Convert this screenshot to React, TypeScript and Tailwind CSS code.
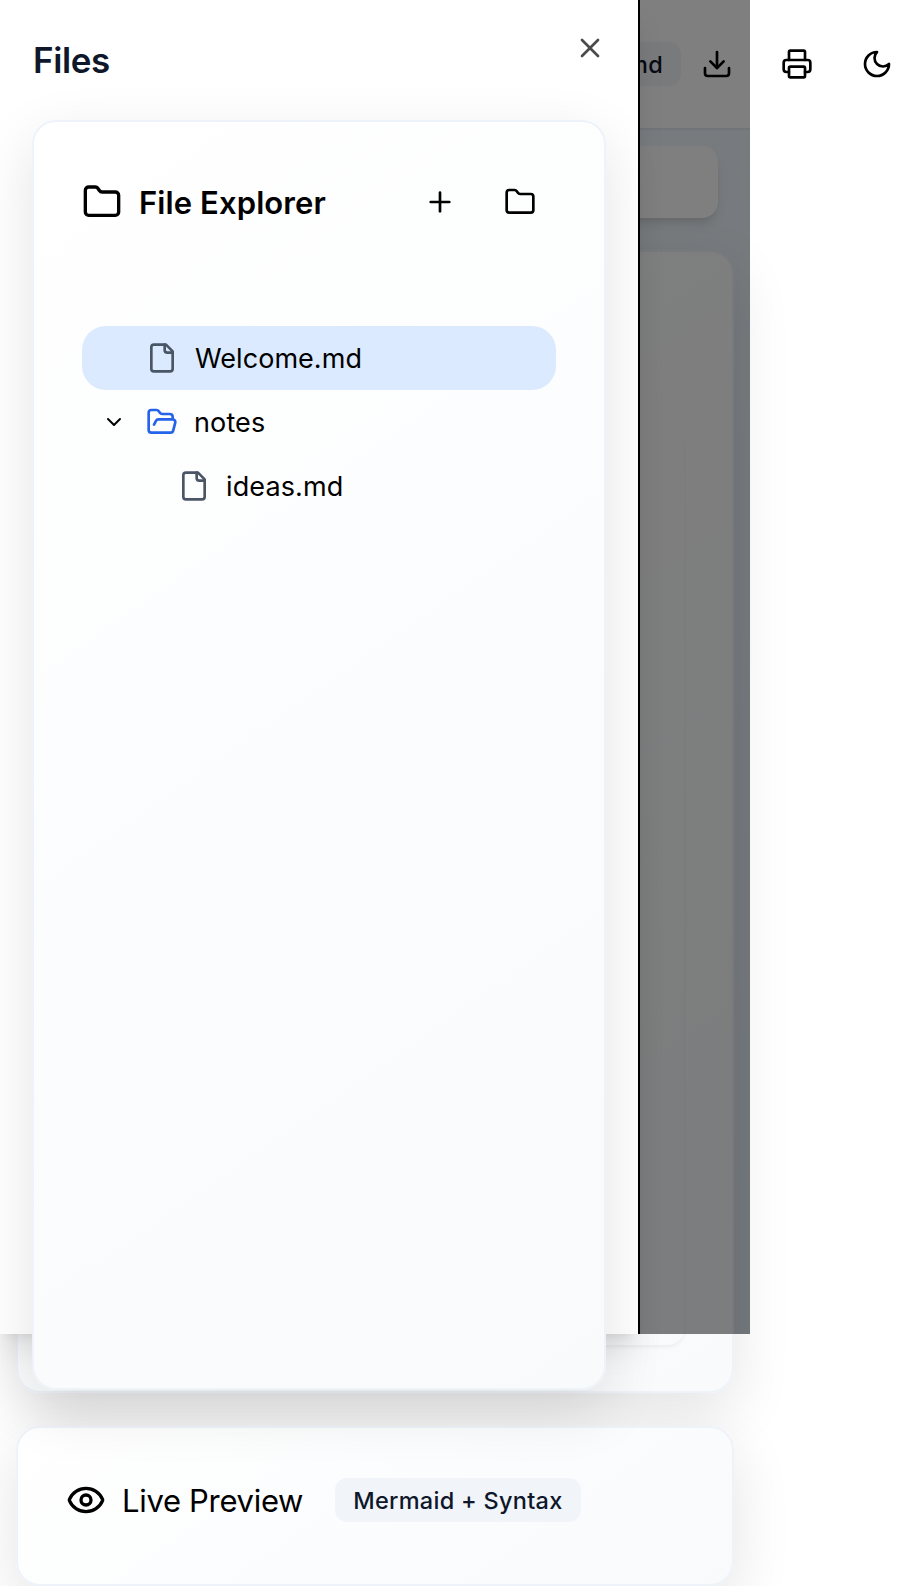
import type { ReactNode } from "react";
import { ChevronDown, Download, Eye, Folder, FolderOpen, Plus, Printer, X } from "lucide-react";

const card =
  "rounded-[24px] border-2 border-[#eef3f9] bg-linear-[145deg] from-white to-[#f8fafc] shadow-[0_20px_60px_rgba(0,0,0,0.11)]";

function Icon({ children, className = "" }: { children: ReactNode; className?: string }) {
  return (
    <svg
      viewBox="0 0 24 24"
      fill="none"
      stroke="currentColor"
      strokeWidth={2}
      strokeLinecap="round"
      strokeLinejoin="round"
      className={`size-8 shrink-0 ${className}`}
    >
      {children}
    </svg>
  );
}

function FileIcon() {
  return (
    <Icon className="text-gray-600">
      <path d="M15 2H6a2 2 0 0 0-2 2v16a2 2 0 0 0 2 2h12a2 2 0 0 0 2-2V7Z" />
      <path d="M14 2v4a2 2 0 0 0 2 2h4" />
    </Icon>
  );
}

function MoonIcon() {
  return (
    <Icon>
      <path d="M12 3a6 6 0 0 0 9 9 9 9 0 1 1-9-9Z" />
    </Icon>
  );
}

function Badge({ children }: { children: ReactNode }) {
  return (
    <span className="flex h-11 shrink-0 items-center whitespace-nowrap rounded-[12px] bg-[#f1f5f9] px-[18px] pt-0.5 text-[23.5px] leading-8 font-medium tracking-[0.28px] text-slate-900">
      {children}
    </span>
  );
}

function Header() {
  return (
    <header className="flex h-[130px] w-[750px] shrink-0 items-center justify-end border-b-2 border-slate-200 bg-white">
      <div className="-mr-[163px] flex shrink-0 items-center">
        <Badge>Welcome.md</Badge>
        <div className="flex gap-2">
          <button className="flex h-16 w-[72px] items-center justify-center"><Download size={32} /></button>
          <button className="flex h-16 w-[72px] items-center justify-center"><Printer size={32} /></button>
          <button className="flex h-16 w-[72px] items-center justify-center"><MoonIcon /></button>
        </div>
      </div>
    </header>
  );
}

function Drawer() {
  return (
    <aside className="absolute top-0 left-0 flex h-[1334px] w-[640px] flex-col border-r-2 border-black bg-white px-8 pt-8 shadow-[0_20px_30px_-6px_rgba(0,0,0,0.1),0_8px_12px_-8px_rgba(0,0,0,0.1)]">
      <div className="flex h-[88px] shrink-0 justify-between">
        <h2 className="pl-px text-[35px] leading-[57px] font-semibold tracking-[-0.4px] text-slate-900">Files</h2>
        <button className="flex size-8 items-center justify-center opacity-70"><X size={32} /></button>
      </div>
      <section className={`${card} flex h-[1270px] w-[574px] shrink-0 flex-col p-12`}>
        <div className="flex h-16 items-center justify-between">
          <h3 className="flex items-center gap-4 text-[31px] leading-8 font-semibold tracking-[0.1px]">
            <Folder size={40} />
            <span className="pt-0.5 pl-px">File Explorer</span>
          </h3>
          <div className="flex gap-2">
            <button className="flex h-16 w-[72px] items-center justify-center"><Plus size={32} /></button>
            <button className="flex h-16 w-[72px] items-center justify-center"><Folder size={32} /></button>
          </div>
        </div>
        <ul className="mt-[92px] text-[27px] leading-10 tracking-[0.12px]">
          <li className="flex h-16 items-center gap-4 rounded-[24px] bg-blue-100 pl-16">
            <FileIcon />
            <span className="pt-0.5 pl-px tracking-[0.05px]">Welcome.md</span>
          </li>
          <li className="flex h-16 items-center pl-5">
            <ChevronDown size={24} className="mr-5" />
            <FolderOpen size={32} className="mr-4 text-[#2563eb]" />
            <span className="pt-0.5">notes</span>
          </li>
          <li className="flex h-16 items-center gap-4 pl-24">
            <FileIcon />
            <span className="pt-0.5">ideas.md</span>
          </li>
        </ul>
      </section>
    </aside>
  );
}

export default function App() {
  return (
    <div className="relative h-[1586px] w-[912px] overflow-hidden bg-white font-['Inter',sans-serif] text-black [font-optical-sizing:none]">
      <div className="h-[1334px] w-[750px] bg-linear-to-br from-slate-50 to-[#e8f2fc]">
        <Header />
        <main className="flex flex-col px-4 pt-4">
          <div className="w-[702px] self-start pl-4">
            <div className="h-[72px] rounded-2xl bg-white shadow-[0_8px_12px_-2px_rgba(0,0,0,0.1),0_4px_8px_-4px_rgba(0,0,0,0.1)]" />
          </div>
          <section className={`${card} mt-8 h-[1143px] w-[718px] px-12 pt-[188px] pb-[46px]`}>
            <div className="h-full rounded-b-2xl shadow-[0_2px_4px_rgba(0,0,0,0.06)]" />
          </section>
          <section className={`${card} mt-[33px] flex h-[160px] w-[718px] items-center px-12 pb-3`}>
            <Eye size={40} />
            <h3 className="mr-8 ml-4 pt-0.5 text-[31px] leading-10 tracking-[-0.31px]">Live Preview</h3>
            <Badge>Mermaid + Syntax</Badge>
          </section>
        </main>
      </div>
      <div className="absolute top-0 left-0 h-[1334px] w-[750px] bg-black/50" />
      <Drawer />
    </div>
  );
}
